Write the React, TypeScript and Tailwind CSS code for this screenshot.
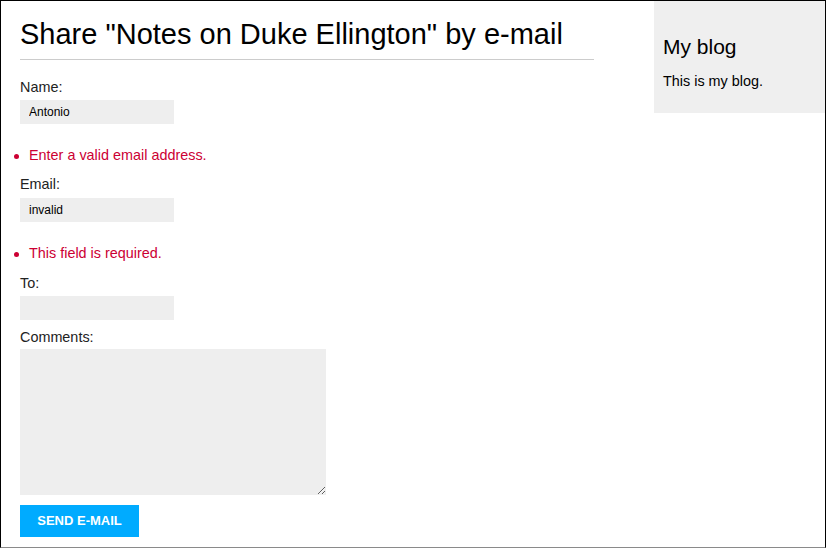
import React from "react";

export default function App() {
  const font = { fontFamily: '"Liberation Sans", Arial, Helvetica, sans-serif' };
  return (
    <div
      className="w-[826px] h-[548px] box-border border-t border-l border-r border-black border-b border-b-[#8a8a8a] flex bg-white text-[#222] overflow-hidden"
      style={font}
    >
      <div className="flex-1 flex flex-col pl-[19px]">
        <h1 className="mt-[16px] w-[574px] text-[29px] leading-[34px] font-normal text-black pb-[8px] border-b border-[#cccccc]">
          Share "Notes on Duke Ellington" by e-mail
        </h1>

        <label className="mt-[17px] text-[14.4px] leading-[20px] text-[#222]">Name:</label>
        <input
          className="mt-[3px] w-[154px] h-[24px] bg-[#eeeeee] px-[9px] text-[12px] text-black outline-none border-0"
          defaultValue="Antonio"
          readOnly
        />

        <div className="mt-[22px] -ml-[6px] flex items-center h-[20px] text-[14.4px] text-[#cc0033]">
          <span className="w-[5px] h-[5px] rounded-full bg-[#cc0033] mr-[10px] mt-[1px]" />
          <span>Enter a valid email address.</span>
        </div>

        <label className="mt-[8px] text-[14.4px] leading-[20px] text-[#222]">Email:</label>
        <input
          className="mt-[4px] w-[154px] h-[24px] bg-[#eeeeee] px-[9px] text-[12px] text-black outline-none border-0"
          defaultValue="invalid"
          readOnly
        />

        <div className="mt-[22px] -ml-[6px] flex items-center h-[20px] text-[14.4px] text-[#cc0033]">
          <span className="w-[5px] h-[5px] rounded-full bg-[#cc0033] mr-[10px] mt-[1px]" />
          <span>This field is required.</span>
        </div>

        <label className="mt-[9px] text-[14.4px] leading-[20px] text-[#222]">To:</label>
        <input
          className="mt-[3px] w-[154px] h-[24px] bg-[#eeeeee] px-[9px] text-[12px] text-black outline-none border-0"
          defaultValue=""
          readOnly
        />

        <label className="mt-[7px] text-[14.4px] leading-[20px] text-[#222]">Comments:</label>
        <textarea
          className="mt-[2px] w-[306px] h-[146px] bg-[#eeeeee] outline-none border-0 block"
          readOnly
        />

        <button className="mt-[10px] w-[119px] h-[32px] bg-[#00abff] text-white font-bold text-[13px] uppercase">
          Send e-mail
        </button>
      </div>

      <div className="w-[171px] h-[112px] bg-[#efefef] pl-[9px] shrink-0">
        <h2 className="mt-[33px] text-[21px] leading-[26px] font-normal text-black">My blog</h2>
        <p className="mt-[12px] text-[14.4px] leading-[18px] text-black">This is my blog.</p>
      </div>
    </div>
  );
}
